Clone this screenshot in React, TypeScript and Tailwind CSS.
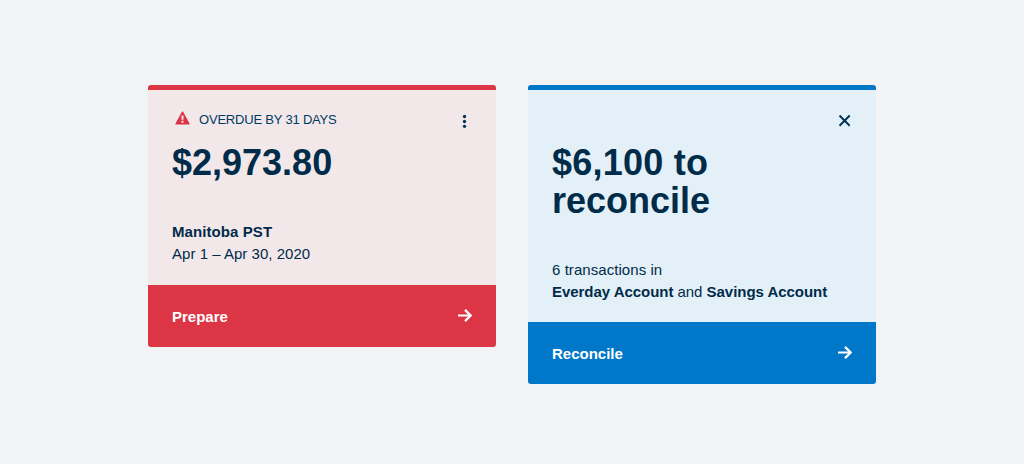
import type { ReactNode } from "react";

function ArrowIcon() {
  return (
    <svg width="16" height="16" viewBox="0 0 16 16" fill="none" stroke="currentColor" strokeWidth="2.2" className="-mt-0.5">
      <path d="M2 8.5H14.5" />
      <path d="M9 2.9L14.6 8.5L9 14.1" />
    </svg>
  );
}

function WarningIcon() {
  return (
    <svg width="15" height="14" viewBox="0 0 15 14" className="-mt-1">
      <path d="M7.5 1.2L13.9 12.9H1.1Z" fill="#dc3545" stroke="#dc3545" strokeWidth="1.4" strokeLinejoin="round" />
      <path d="M7.5 4.6V8.8M7.5 9.8V11.8" stroke="#f3e8e9" strokeWidth="2" />
    </svg>
  );
}

function MoreIcon() {
  return (
    <svg width="16" height="16" viewBox="0 0 16 16" fill="#003556">
      <circle cx="8.5" cy="4.5" r="1.65" />
      <circle cx="8.5" cy="9.5" r="1.65" />
      <circle cx="8.5" cy="14.3" r="1.65" />
    </svg>
  );
}

function CloseIcon() {
  return (
    <svg width="16" height="16" viewBox="0 0 16 16" stroke="#003556" strokeWidth="2">
      <path d="M3.5 3.5L13.7 13.7M13.7 3.5L3.5 13.7" />
    </svg>
  );
}

interface CardProps {
  frame: string;
  body: string;
  footer: string;
  label?: ReactNode;
  control: ReactNode;
  title: ReactNode;
  details: ReactNode;
  action: string;
}

function Card({ frame, body, footer, label, control, title, details, action }: CardProps) {
  return (
    <section className={`w-[348px] overflow-hidden rounded-[3px] border-t-[5px] ${frame}`}>
      <div className={`px-6 pt-[22px] ${body}`}>
        <div className="flex h-8 items-start justify-between">
          <div className="flex items-center">{label}</div>
          {control}
        </div>
        <h2 className="text-[36px] leading-[38px] font-bold">{title}</h2>
        <div className="mt-[39px] text-[15px] leading-[22px]">{details}</div>
      </div>
      <button className={`flex h-[62px] w-full items-center justify-between px-6 text-[15px] font-bold text-white ${footer}`}>
        <span className="pt-0.5">{action}</span>
        <ArrowIcon />
      </button>
    </section>
  );
}

export default function App() {
  return (
    <main className="flex h-[464px] w-[1024px] items-start justify-center gap-8 bg-[#f1f3f5] pt-[85px] font-['Liberation_Sans',Arial,sans-serif] text-[#002b49]">
      <Card
        frame="border-[#dc3545]"
        body="bg-[#f3e8e9] pb-5"
        footer="bg-[#dc3545]"
        label={
          <div className="flex h-4 items-center gap-[9px] pl-[3px]">
            <WarningIcon />
            <span className="text-[13px] leading-4 tracking-[-0.2px] whitespace-nowrap text-[#003a63]">OVERDUE BY 31 DAYS</span>
          </div>
        }
        control={<button aria-label="More"><MoreIcon /></button>}
        title="$2,973.80"
        details={
          <>
            <p className="font-bold tracking-[0.08px]">Manitoba PST</p>
            <p className="tracking-[0.03px]">Apr 1 – Apr 30, 2020</p>
          </>
        }
        action="Prepare"
      />
      <Card
        frame="border-[#0077c8]"
        body="bg-[#e4f0f8] pb-[19px]"
        footer="bg-[#0077c8]"
        control={<button aria-label="Close"><CloseIcon /></button>}
        title={<><span className="tracking-[0.25px]">$6,100 to</span><br />reconcile</>}
        details={
          <>
            <p className="tracking-[0.06px]">6 transactions in</p>
            <p className="tracking-[-0.04px]"><strong>Everday Account</strong> and <strong>Savings Account</strong></p>
          </>
        }
        action="Reconcile"
      />
    </main>
  );
}
